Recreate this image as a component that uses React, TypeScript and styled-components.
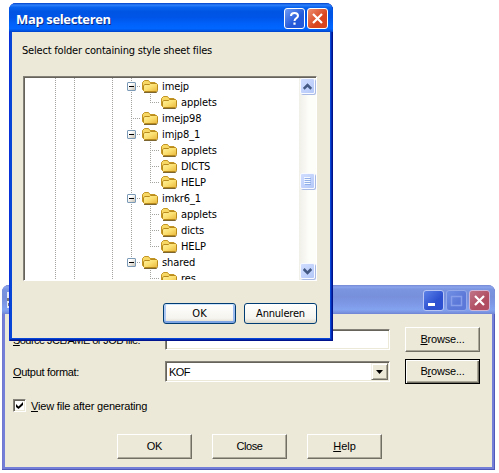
import React from "react";
import styled, { createGlobalStyle, css } from "styled-components";

const tahoma = `"DejaVu Sans Condensed", "DejaVu Sans", sans-serif`;
const msSans = `"Liberation Sans", Arial, sans-serif`;
const face = "#ece9d8";

const GlobalStyle = createGlobalStyle`
  *, *::before, *::after { box-sizing: border-box; }
  body { margin: 0; background: #fff; overflow: hidden; }
  button { margin: 0; padding: 0; color: #000; }
`;

const Desktop = styled.main`
  position: relative;
  width: 499px;
  height: 473px;
  background: #fff;
  color: #000;
`;

const Label = styled.span<{ $track?: number }>`
  white-space: nowrap;
  letter-spacing: ${(p) => p.$track ?? 0}px;
  u { text-underline-offset: 1px; text-decoration-thickness: 1px; }
`;

/* ---------- Output window ---------- */

const OutputWindow = styled.section`
  position: absolute;
  left: 2px;
  top: 285px;
  width: 493px;
  height: 185px;
  display: flex;
  flex-direction: column;
  border-radius: 7px 7px 0 0;
  overflow: hidden;
  padding: 0 3px 3px;
  background: #7480d8;
  box-shadow: inset -1px -1px #5058b8, inset 1px 0 #7078d0;
  font: 11px ${msSans};
`;

const OutputTitle = styled.header`
  height: 29px;
  flex: none;
  margin: 0 -3px;
  padding: 5px 5px 0 0;
  display: flex;
  justify-content: flex-end;
  gap: 2px;
  background: linear-gradient(#7488d4 0, #8ba4ec 7%, #7b95e0 14%, #7890dc 40%, #7d98e6 65%, #83a3ef 85%, #7b95e3 94%, #7084d2);
`;

const AppIcon = styled.svg`
  margin: 2px auto 0 5px;
`;

const OutputBody = styled.div`
  flex: 1;
  background: ${face};
  padding: 13px 12px 0 8px;
  display: flex;
  flex-direction: column;
`;

const FormRow = styled.div<{ $gap?: number }>`
  display: grid;
  grid-template-columns: 152px 225px 75px;
  column-gap: 0;
  align-items: center;
  height: 25px;
  margin-bottom: ${(p) => p.$gap ?? 0}px;
  & > :last-child { margin-left: 15px; }
`;

const sunken = css`
  background: #fff;
  border: 1px solid;
  border-color: #848278 #fff #fff #848278;
  box-shadow: inset 1px 1px #65635a, inset -1px -1px #ece9d8;
`;

const TextField = styled.div`
  ${sunken}
  height: 21px;
`;

const Combo = styled.div`
  ${sunken}
  height: 21px;
  display: flex;
  justify-content: space-between;
  padding: 1px 1px 1px 3px;
  line-height: 19px;
`;

const ComboArrow = styled.span`
  width: 17px;
  height: 17px;
  flex: none;
  display: flex;
  align-items: center;
  justify-content: center;
  background: ${face};
  border: 1px solid;
  border-color: #f4f2e8 #716f64 #716f64 #f4f2e8;
  box-shadow: inset 1px 1px #fff, inset -1px -1px #aca899;
`;

const ClassicButton = styled.button<{ $focus?: boolean }>`
  width: 75px;
  height: 25px;
  flex: none;
  font: 11px/21px ${msSans};
  background: ${face};
  border: 1px solid;
  border-color: ${(p) => (p.$focus ? "#000" : "#fff #716f64 #716f64 #fff")};
  box-shadow: ${(p) =>
    p.$focus
      ? "inset 1px 1px #fff, inset -1px -1px #716f64, inset -2px -2px #aca899"
      : "inset -1px -1px #aca899"};
`;

const CheckRow = styled.label`
  display: flex;
  align-items: center;
  gap: 5px;
  height: 13px;
  margin-top: 15px;
`;

const CheckBox = styled.span`
  ${sunken}
  width: 13px;
  height: 13px;
  display: flex;
  align-items: center;
  justify-content: center;
`;

const ButtonBar = styled.div`
  display: flex;
  gap: 20px;
  margin: 22px 0 0 104px;
`;

/* ---------- Folder dialog ---------- */

const Dialog = styled.section`
  position: absolute;
  left: 9px;
  top: 3px;
  width: 324px;
  height: 338px;
  display: flex;
  flex-direction: column;
  padding: 0 3px 3px;
  border-radius: 7px 7px 0 0;
  overflow: hidden;
  background: #0846d8;
  box-shadow: inset 1px 0 #0831d9, inset -1px -1px #00138c, inset -2px -2px #0129b0;
  font: 11px ${tahoma};
`;

const DialogTitle = styled.header`
  height: 29px;
  flex: none;
  margin: 0 -3px;
  padding: 5px 5px 0 7px;
  display: flex;
  gap: 2px;
  background: linear-gradient(#0040c8 0, #2f80fb 7%, #0863ee 15%, #0054e3 30%, #0055e8 50%, #0061fa 72%, #0066ff 88%, #0050dd 97%, #003dc0);
`;

const Caption = styled.h1`
  margin: 0 auto 0 0;
  color: #fff;
  font: bold 13px/22px "Open Sans", sans-serif;
  letter-spacing: -0.35px;
  text-shadow: 1px 1px #0a2b88;
  white-space: nowrap;
`;

type Tone = "blue" | "red" | "softBlue" | "faded" | "softRed";
const tones: Record<Tone, [string, string, string]> = {
  blue: ["#6f9cf5", "#2358d8", "#fff"],
  red: ["#ec8f70", "#d9451f", "#fff"],
  softBlue: ["#5c82e8", "#2d50d0", "#b7c6f4"],
  faded: ["#7190e4", "#5c78d8", "#93a9ea"],
  softRed: ["#c07488", "#b14e62", "#d1b6d5"],
};

const CaptionButton = styled.span<{ $tone: Tone }>`
  width: 21px;
  height: 21px;
  flex: none;
  display: flex;
  border: 1px solid ${(p) => tones[p.$tone][2]};
  border-radius: 3px;
  background: linear-gradient(135deg, ${(p) => tones[p.$tone][0]}, ${(p) => tones[p.$tone][1]} 60%);
`;

const DialogBody = styled.div`
  flex: 1;
  min-height: 0;
  display: flex;
  flex-direction: column;
  background: ${face};
  padding: 12px 13px 0 11px;
`;

const Prompt = styled.p`
  margin: 0 0 18px -1px;
  line-height: 14px;
`;

const TreeBox = styled.div`
  ${sunken}
  box-shadow: inset 1px 1px #65635a;
  height: 205px;
  flex: none;
  display: flex;
  padding: 1px 0 0 1px;
`;

const Tree = styled.div`
  flex: 1;
  overflow: hidden;
  padding-left: 21px;
`;

const TreeRow = styled.div`
  display: flex;
  height: 16px;
  line-height: 18px;
`;

const dotsV = "repeating-linear-gradient(#a5a3a0 0 1px, transparent 1px 2px)";
const dotsH = "repeating-linear-gradient(90deg, #a5a3a0 0 1px, transparent 1px 2px)";

type Shape = "none" | "line" | "tee" | "end";
const shapes: Record<Shape, string> = {
  none: "none",
  line: `${dotsV} 9px 0 / 1px 16px no-repeat`,
  tee: `${dotsV} 9px 0 / 1px 16px no-repeat, ${dotsH} 9px 8px / 11px 1px no-repeat`,
  end: `${dotsV} 9px 0 / 1px 9px no-repeat, ${dotsH} 9px 8px / 11px 1px no-repeat`,
};

const Guide = styled.span<{ $shape: Shape }>`
  width: 19px;
  height: 16px;
  flex: none;
  padding: 4px 0 0 5px;
  background: ${(p) => shapes[p.$shape]};
`;

const Expander = styled.span`
  width: 9px;
  height: 9px;
  display: flex;
  align-items: center;
  justify-content: center;
  border: 1px solid #7b9ab8;
  border-radius: 1px;
  background: linear-gradient(135deg, #fff 30%, #c8c2b4);
  &::before { content: ""; width: 5px; height: 1px; background: #000; }
`;

const FolderSvg = styled.svg`
  flex: none;
  margin: 0 4px 0 1px;
`;

const ScrollTrack = styled.div`
  width: 17px;
  flex: none;
  display: flex;
  flex-direction: column;
  background: linear-gradient(90deg, #f0efe8, #fdfdfa 60%);
  padding: 0 0 0 1px;
`;

const ScrollPart = styled.span<{ $top?: number }>`
  width: 15px;
  height: 16px;
  margin-top: ${(p) => p.$top ?? 0}px;
  flex: none;
  display: flex;
  align-items: center;
  justify-content: center;
  border: 1px solid #f8faff;
  border-radius: 2px;
  background: linear-gradient(135deg, #d0ddff, #b4c8f8);
  box-shadow: 1px 1px #a9bbe5;
`;

const DialogButtons = styled.div`
  display: flex;
  justify-content: flex-end;
  gap: 8px;
  margin-top: 22px;
`;

const LunaButton = styled.button<{ $primary?: boolean }>`
  width: 73px;
  height: 21px;
  border: 1px solid #003c74;
  border-radius: 3px;
  background: linear-gradient(#fff, #f5f4ee 75%, #dcd8cc);
  box-shadow: ${(p) => (p.$primary ? "inset 0 1px #cee7ff, inset 0 -2px #7fa5e5, inset 2px 0 #adc8f2, inset -2px 0 #9cbcf0" : "none")};
  font: 11px/19px ${tahoma};
`;

const Folder = () => (
  <FolderSvg width="16" height="16" viewBox="0 0 16 16">
    <defs>
      <linearGradient id="folderFront" x1="0" y1="0" x2="1" y2="1">
        <stop offset="0" stopColor="#fff3a0" />
        <stop offset="0.5" stopColor="#fbdf70" />
        <stop offset="1" stopColor="#e8b63a" />
      </linearGradient>
    </defs>
    <path d="M0.5 11.5V4.5L2.5 2.5H6.5L8 4.5H13L14.5 6V12.5H1.5Z" fill="#f7d864" stroke="#c29524" />
    <path d="M2.5 13.5L1.5 12.5V7.5L3 6.5H7.5L8.5 5.5H14.5L15.5 6.5V12.5L14.5 13.5Z" fill="url(#folderFront)" stroke="#b98a1c" />
    <path d="M2 14.5H14.5L15.5 13.5" fill="none" stroke="#7c652e" />
  </FolderSvg>
);

const Cross = () => (
  <svg width="19" height="19" viewBox="0 0 19 19">
    <path d="M5 5L14 14M14 5L5 14" stroke="#fff" strokeWidth="2.2" />
  </svg>
);

const Chevron = ({ down }: { down?: boolean }) => (
  <svg width="9" height="7" viewBox="0 0 9 7">
    <path d={down ? "M0.7 1L4.5 4.8L8.3 1" : "M0.7 5.8L4.5 2L8.3 5.8"} fill="none" stroke="#445a84" strokeWidth="2.6" />
  </svg>
);

interface Node {
  name: string;
  child?: boolean;
  open?: boolean;
  last?: boolean;
  underLast?: boolean;
}

const nodes: Node[] = [
  { name: "imejp", open: true },
  { name: "applets", child: true, last: true },
  { name: "imejp98" },
  { name: "imjp8_1", open: true },
  { name: "applets", child: true },
  { name: "DICTS", child: true },
  { name: "HELP", child: true, last: true },
  { name: "imkr6_1", open: true },
  { name: "applets", child: true },
  { name: "dicts", child: true },
  { name: "HELP", child: true, last: true },
  { name: "shared", open: true, last: true },
  { name: "res", child: true, underLast: true },
];

const TreeItem = ({ node }: { node: Node }) => {
  const branch: Shape = node.last ? "end" : "tee";
  return (
    <TreeRow>
      <Guide $shape="line" />
      <Guide $shape="line" />
      <Guide $shape="none" />
      <Guide $shape="line" />
      {node.child && <Guide $shape={node.underLast ? "none" : "line"} />}
      <Guide $shape={branch}>{node.open && <Expander />}</Guide>
      <Folder />
      <Label $track={-0.1}>{node.name}</Label>
    </TreeRow>
  );
};

export default function App() {
  return (
    <Desktop>
      <GlobalStyle />
      <OutputWindow>
        <OutputTitle>
          <AppIcon width="16" height="16" viewBox="0 0 16 16">
            <path d="M0 0H16V16H0Z" fill="#e9ecf5" />
            <path d="M0 6H3V9H0ZM1 11H4V14H1Z" fill="#76777c" />
          </AppIcon>
          <CaptionButton $tone="softBlue">
            <svg width="19" height="19" viewBox="0 0 19 19">
              <path d="M4 12H11V15H4Z" fill="#fff" />
            </svg>
          </CaptionButton>
          <CaptionButton $tone="faded">
            <svg width="19" height="19" viewBox="0 0 19 19">
              <path d="M4.5 5V14.5H14.5V5M4 5.5H15" fill="none" stroke="#879eeb" strokeWidth="1.5" />
            </svg>
          </CaptionButton>
          <CaptionButton $tone="softRed">
            <Cross />
          </CaptionButton>
        </OutputTitle>
        <OutputBody>
          <FormRow $gap={7}>
            <Label $track={-0.55}><u>S</u>ource JCL/AME or JOB file:</Label>
            <TextField />
            <ClassicButton><Label $track={-0.2}><u>B</u>rowse...</Label></ClassicButton>
          </FormRow>
          <FormRow>
            <Label $track={-0.3}><u>O</u>utput format:</Label>
            <Combo>
              <Label $track={-0.6}>KOF</Label>
              <ComboArrow>
                <svg width="7" height="4" viewBox="0 0 7 4"><path d="M0 0H7L3.5 4Z" /></svg>
              </ComboArrow>
            </Combo>
            <ClassicButton $focus><Label $track={-0.2}>B<u>r</u>owse...</Label></ClassicButton>
          </FormRow>
          <CheckRow>
            <CheckBox>
              <svg width="7" height="7" viewBox="0 0 7 7"><path d="M0 2L2.5 4.5L7 0V3L2.5 7L0 5Z" /></svg>
            </CheckBox>
            <Label $track={-0.18}><u>V</u>iew file after generating</Label>
          </CheckRow>
          <ButtonBar>
            <ClassicButton><Label $track={-0.3}>OK</Label></ClassicButton>
            <ClassicButton><Label $track={-0.4}>Close</Label></ClassicButton>
            <ClassicButton><Label><u>H</u>elp</Label></ClassicButton>
          </ButtonBar>
        </OutputBody>
      </OutputWindow>

      <Dialog>
        <DialogTitle>
          <Caption>Map selecteren</Caption>
          <CaptionButton $tone="blue">
            <svg width="19" height="19" viewBox="0 0 19 19">
              <path d="M6 7C6 3 13 3 13 7C13 9.3 9.5 9 9.5 12" fill="none" stroke="#fff" strokeWidth="2" />
              <path d="M8.4 13.5H10.6V15.7H8.4Z" fill="#fff" />
            </svg>
          </CaptionButton>
          <CaptionButton $tone="red">
            <Cross />
          </CaptionButton>
        </DialogTitle>
        <DialogBody>
          <Prompt><Label $track={-0.2}>Select folder containing style sheet files</Label></Prompt>
          <TreeBox>
            <Tree>
              {nodes.map((node, i) => <TreeItem key={i} node={node} />)}
            </Tree>
            <ScrollTrack>
              <ScrollPart><Chevron /></ScrollPart>
              <ScrollPart $top={79}>
                <svg width="7" height="8" viewBox="0 0 7 8">
                  <path d="M0 .5H6M0 2.5H6M0 4.5H6M0 6.5H6" stroke="#f4f8ff" />
                  <path d="M1 1.5H7M1 3.5H7M1 5.5H7M1 7.5H7" stroke="#93afe8" />
                </svg>
              </ScrollPart>
              <ScrollPart $top={74}><Chevron down /></ScrollPart>
            </ScrollTrack>
          </TreeBox>
          <DialogButtons>
            <LunaButton $primary><Label>OK</Label></LunaButton>
            <LunaButton><Label $track={-0.2}>Annuleren</Label></LunaButton>
          </DialogButtons>
        </DialogBody>
      </Dialog>
    </Desktop>
  );
}
